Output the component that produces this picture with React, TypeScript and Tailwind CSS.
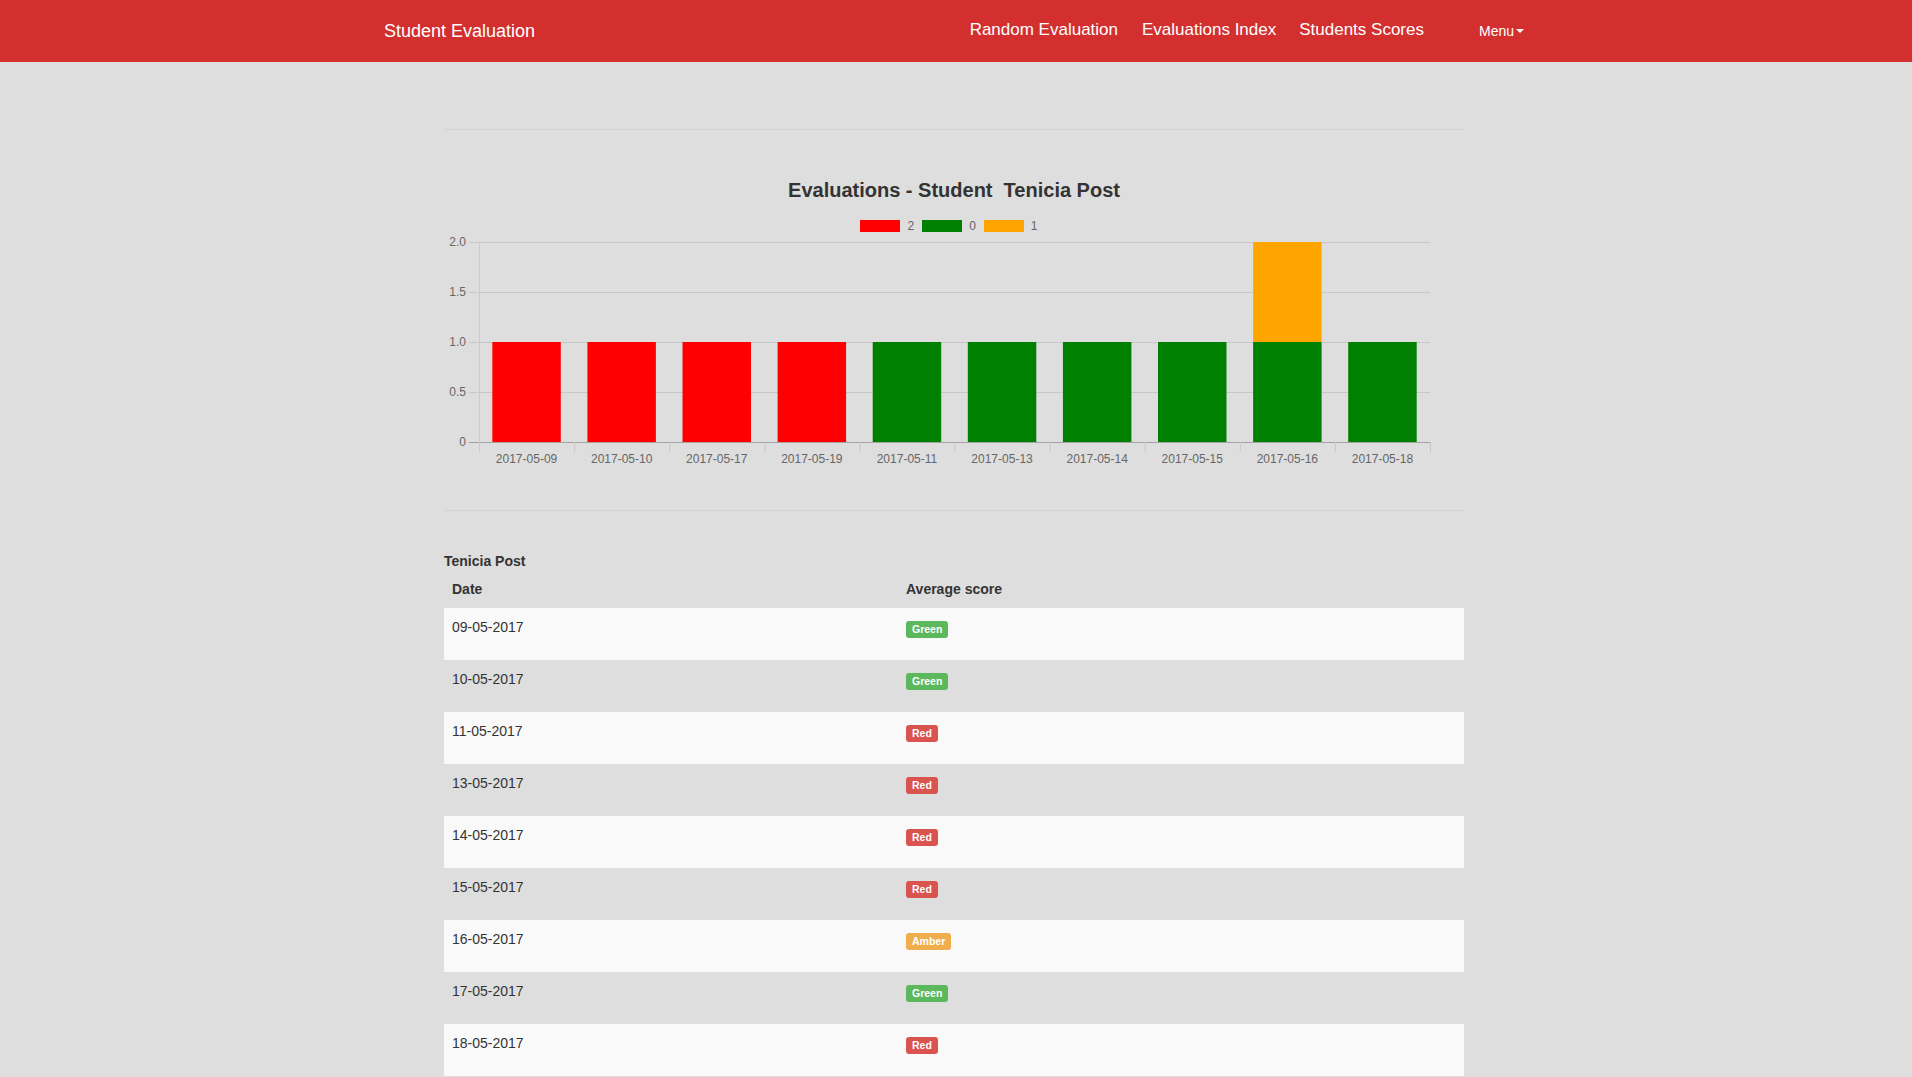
import React from 'react'

const labels = [
  '2017-05-09', '2017-05-10', '2017-05-17', '2017-05-19', '2017-05-11',
  '2017-05-13', '2017-05-14', '2017-05-15', '2017-05-16', '2017-05-18',
]
const barColors = ['#ff0000', '#ff0000', '#ff0000', '#ff0000', '#008000', '#008000', '#008000', '#008000', '#008000', '#008000']

const rows = [
  { date: '09-05-2017', score: 'Green' },
  { date: '10-05-2017', score: 'Green' },
  { date: '11-05-2017', score: 'Red' },
  { date: '13-05-2017', score: 'Red' },
  { date: '14-05-2017', score: 'Red' },
  { date: '15-05-2017', score: 'Red' },
  { date: '16-05-2017', score: 'Amber' },
  { date: '17-05-2017', score: 'Green' },
  { date: '18-05-2017', score: 'Red' },
]

const badgeBg: Record<string, string> = {
  Green: 'bg-[#5cb85c]',
  Red: 'bg-[#d9534f]',
  Amber: 'bg-[#f0ad4e]',
}

const Chart = () => {
  const x0 = 35
  const step = 95.1
  const top = 10
  const bottom = 210
  const right = x0 + step * 10
  const ticks = [
    { v: '2.0', y: top },
    { v: '1.5', y: 60 },
    { v: '1.0', y: 110 },
    { v: '0.5', y: 160 },
    { v: '0', y: bottom },
  ]
  return (
    <svg width="1020" height="245" className="block" style={{ fontFamily: '"Liberation Sans", Arial, sans-serif' }}>
      {ticks.map((t) => (
        <g key={t.v}>
          <line x1={25} x2={right} y1={t.y + 0.5} y2={t.y + 0.5} stroke={t.v === '0' ? '#a3a3a3' : '#c7c7c7'} strokeWidth="1" />
          <text x={22} y={t.y + 4} textAnchor="end" fontSize="12" fill="#666">{t.v}</text>
        </g>
      ))}
      <line x1={x0 + 0.5} x2={x0 + 0.5} y1={top} y2={bottom + 10} stroke="#cbcbcb" />
      {labels.map((l, i) => {
        const cx = x0 + step * i
        const bx = cx + step * 0.14
        const bw = step * 0.72
        return (
          <g key={l}>
            <line x1={cx + step + 0.5} x2={cx + step + 0.5} y1={bottom} y2={bottom + 10} stroke="#c7c7c7" />
            <rect x={bx} y={110} width={bw} height={100} fill={barColors[i]} />
            {i === 8 && <rect x={bx} y={top} width={bw} height={100} fill="#ffa500" />}
            <text x={cx + step / 2} y={bottom + 21} textAnchor="middle" fontSize="12" fill="#666">{l}</text>
          </g>
        )
      })}
    </svg>
  )
}

const App = () => {
  return (
    <div className="min-h-[1077px] bg-[#dedede] text-[#333] font-['Liberation_Sans',Arial,sans-serif]">
      <nav className="h-[62px] bg-[#d32f2f] flex items-center justify-between pl-[384px] pr-[388px] text-white">
        <span className="text-[18px]">Student Evaluation</span>
        <div className="flex items-center">
          <span className="text-[17px] -mt-[3px]">Random Evaluation</span>
          <span className="text-[17px] -mt-[3px] ml-[24px]">Evaluations Index</span>
          <span className="text-[17px] -mt-[3px] ml-[23px]">Students Scores</span>
          <span className="text-[14px] ml-[55px] flex items-center">
            Menu
            <span className="ml-[2px] w-0 h-0 border-l-[4px] border-r-[4px] border-t-[4px] border-l-transparent border-r-transparent border-t-white" />
          </span>
        </div>
      </nav>

      <div className="w-[1020px] ml-[444px]">
        <div className="mt-[67px] border-t border-[#d2d2d2]" />

        <div className="mt-[48px] text-center text-[20px] leading-[24px] font-bold whitespace-pre">
          Evaluations - Student  Tenicia Post
        </div>
        <div className="mt-[18px] h-3 flex justify-center items-center text-[12px] text-[#666] -translate-x-[5px]">
          <span className="w-10 h-3 bg-[#ff0000]" />
          <span className="ml-[7px] mr-[8px] leading-3">2</span>
          <span className="w-10 h-3 bg-[#008000]" />
          <span className="ml-[7px] mr-[8px] leading-3">0</span>
          <span className="w-10 h-3 bg-[#ffa500]" />
          <span className="ml-[7px] leading-3">1</span>
        </div>
        <Chart />

        <div className="mt-[33px] border-t border-[#d2d2d2]" />

        <div className="mt-[40px] text-[14px] leading-5 font-bold">Tenicia Post</div>
        <div className="grid grid-cols-[454px_1fr] text-[14px] leading-5 font-bold pt-2 pb-[9px]">
          <div className="px-2">Date</div>
          <div className="px-2">Average score</div>
        </div>
        {rows.map((r, i) => (
          <div
            key={r.date}
            className={`grid grid-cols-[454px_1fr] h-[52px] text-[14px] leading-5 ${i % 2 === 0 ? 'bg-[#f9f9f9]' : ''}`}
          >
            <div className="px-2 pt-[9px]">{r.date}</div>
            <div className="px-2 pt-[10px]">
              <span className={`inline-block h-[17px] px-[6px] rounded-[3px] text-[10.5px] leading-[17px] font-bold text-white ${badgeBg[r.score]}`}>
                {r.score}
              </span>
            </div>
          </div>
        ))}
      </div>
    </div>
  )
}

export default App
